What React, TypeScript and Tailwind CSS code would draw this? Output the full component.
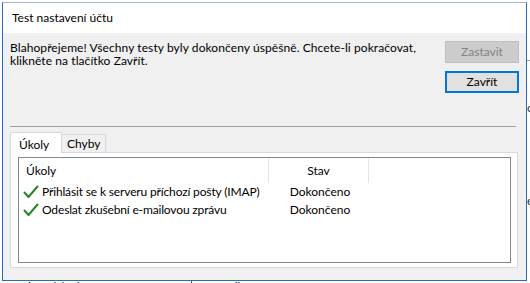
import React from "react";

const tasks = [
  { name: "Přihlásit se k serveru příchozí pošty (IMAP)", state: "Dokončeno" },
  { name: "Odeslat zkušební e-mailovou zprávu", state: "Dokončeno" },
];

const Check = () => (
  <svg width="16" height="14" viewBox="0 0 16 14" className="shrink-0">
    <path
      d="M1.5 7.5L5.5 12L14.5 1.5"
      fill="none"
      stroke="#2a8526"
      strokeWidth="2"
      strokeLinecap="round"
      strokeLinejoin="round"
    />
  </svg>
);

export default function App() {
  return (
    <div className="relative w-[530px] h-[283px] overflow-hidden bg-white text-[12px] text-black font-['Lato',sans-serif]">
      {/* the window behind, peeking out at the edges */}
      <div className="absolute left-[527px] top-[60px] w-[10px] h-px bg-[#a0a0a0]" />
      <div className="absolute left-[527px] top-[101px] text-[12px] leading-[14px] text-[#333]">o</div>
      <div className="absolute left-[527px] top-[194px] text-[12px] leading-[14px] text-[#333]">e</div>
      <div className="absolute left-[14px] top-[280px] text-[12px] leading-[14px] text-[#222] whitespace-nowrap">Uživatelské jméno:</div>
      <div className="absolute left-[191px] top-[280px] w-px h-[6px] bg-[#555]" />
      <div className="absolute left-[194px] top-[280px] text-[12px] leading-[14px] text-[#222] whitespace-nowrap">tomas.cikora@seznam.cz</div>

      <div className="relative ml-[2px] mt-[2px] w-[525px] h-[279px] flex flex-col border border-[#1c6fc1] border-t-[#9fb7d2] bg-[#f0f0f0]">
        <div className="h-[30px] shrink-0 flex items-center pl-[9px] bg-white">Test nastavení účtu</div>

        <div className="h-[93px] shrink-0 flex">
          <p className="pl-[7px] pt-[8px] leading-[13px] whitespace-nowrap tracking-[0.08px]">
            Blahopřejeme! Všechny testy byly dokončeny úspěšně. Chcete-li pokračovat,
            <br />
            klikněte na tlačítko Zavřít.
          </p>
          <div className="ml-auto mr-[7px] pt-[8px] flex flex-col gap-[8px]">
            <button className="w-[74px] h-[22px] border border-[#bfbfbf] bg-[#cccccc] text-[#838383]">Zastavit</button>
            <button className="w-[74px] h-[22px] border-2 border-[#0078d7] bg-[#e1e1e1]">Zavřít</button>
          </div>
        </div>

        <div className="ml-[7px] w-[506px] h-px bg-[#a0a0a0]" />

        <div className="ml-[7px] mt-[5px] w-[508px] flex flex-col">
          <div className="flex items-end h-[20px]">
            <div className="relative z-10 w-[52px] h-[21px] -mb-px pl-[8px] pt-[3px] bg-white border border-b-0 border-[#d9d9d9]">Úkoly</div>
            <div className="w-[44px] h-[18px] pl-[5px] leading-[18px] bg-[#f0f0f0] border border-b-0 border-l-0 border-[#d9d9d9]">Chyby</div>
          </div>
          <div className="h-[116px] bg-white border border-[#d9d9d9] pl-[7px] pr-[6px] pt-[4px] pb-[4px]">
            <div className="h-full border border-[#828790] bg-white">
              <div className="flex h-[25px] items-center">
                <div className="w-[250px] h-full pl-[7px] flex items-center border-r border-[#e5e5e5]">Úkoly</div>
                <div className="w-[100px] h-full flex items-center justify-center border-r border-[#e5e5e5]">Stav</div>
              </div>
              {tasks.map((t) => (
                <div key={t.name} className="flex h-[18px] items-center whitespace-nowrap">
                  <div className="w-[251px] flex items-center gap-[3px] pl-[4px]">
                    <Check />
                    <span className="tracking-[-0.15px]">{t.name}</span>
                  </div>
                  <div className="w-[100px] text-center">{t.state}</div>
                </div>
              ))}
            </div>
          </div>
        </div>
      </div>
    </div>
  );
}
